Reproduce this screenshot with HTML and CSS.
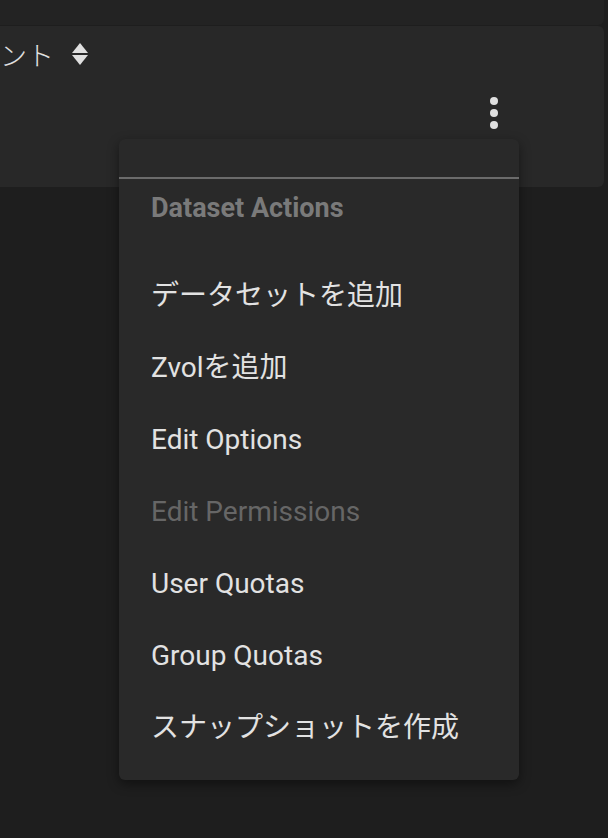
FILE: index.html
```html
<!DOCTYPE html>
<html lang="ja">
<head>
    <meta charset="utf-8">
    <title>Datasets</title>
    <link rel="stylesheet" href="styles.css">
</head>
<body>
    <div class="topbar"></div>
    <div class="card">
        <div class="table-head">
            <span class="col-title">ント</span>
            <svg class="sort-icon" width="18" height="24" viewBox="0 0 18 24">
                <path d="M9 1 L17 11 L1 11 Z" fill="#e0e0e0"/>
                <path d="M9 23 L17 13 L1 13 Z" fill="#e0e0e0"/>
            </svg>
        </div>
        <div class="table-actions">
            <button class="more-btn" type="button">
                <svg width="10" height="32" viewBox="0 0 10 32">
                    <circle cx="5" cy="4" r="4" fill="#e0e0e0"/>
                    <circle cx="5" cy="16" r="4" fill="#e0e0e0"/>
                    <circle cx="5" cy="28" r="4" fill="#e0e0e0"/>
                </svg>
            </button>
        </div>
    </div>

    <div class="menu">
        <div class="menu-top"></div>
        <div class="menu-header">Dataset Actions</div>
        <ul class="menu-list">
            <li class="menu-item">データセットを追加</li>
            <li class="menu-item">Zvolを追加</li>
            <li class="menu-item">Edit Options</li>
            <li class="menu-item disabled">Edit Permissions</li>
            <li class="menu-item">User Quotas</li>
            <li class="menu-item">Group Quotas</li>
            <li class="menu-item">スナップショットを作成</li>
        </ul>
    </div>
</body>
</html>
```

FILE: styles.css
```css
html, body { margin: 0; padding: 0; }
body { width: 608px; height: 838px; overflow: hidden; background-color: #1e1e1e; font-family: Roboto, "Noto Sans CJK JP", sans-serif; color: #e0e0e0; }

.topbar { width: 604px; height: 25px; background-color: #232323; border-radius: 0 0 6px 0; }

.card { width: 604px; height: 161px; margin-top: 1px; background-color: #282828; border-radius: 0 6px 6px 0; box-sizing: border-box; overflow: hidden; }
.table-head { display: flex; align-items: center; height: 52px; padding-top: 2px; padding-left: 0; font-size: 27px; line-height: 1; }
.col-title { font-family: "Noto Sans CJK JP", sans-serif; font-weight: 300; white-space: nowrap; }
.sort-icon { margin-left: 17px; }
.table-actions { display: flex; justify-content: flex-end; padding-right: 105px; padding-top: 17px; }
.more-btn { padding: 0; border: 0; background: none; display: block; }
.more-btn svg { display: block; }

.menu { position: absolute; left: 119px; top: 139px; width: 400px; background-color: #292929; border-radius: 6px; box-shadow: 0 4px 12px rgba(0, 0, 0, 0.45); padding-bottom: 16px; }
.menu-top { height: 38px; border-bottom: 2px solid #6b6b6b; }
.menu-header { height: 58px; line-height: 58px; margin-bottom: 23px; padding-left: 32px; font-size: 27px; font-weight: bold; color: #7a7a7a; }
.menu-list { list-style: none; margin: 0; padding: 0; }
.menu-item { height: 72px; line-height: 72px; padding-left: 32px; font-size: 28px; color: #e2e2e2; white-space: nowrap; }
.menu-item.disabled { color: #666666; }
```
